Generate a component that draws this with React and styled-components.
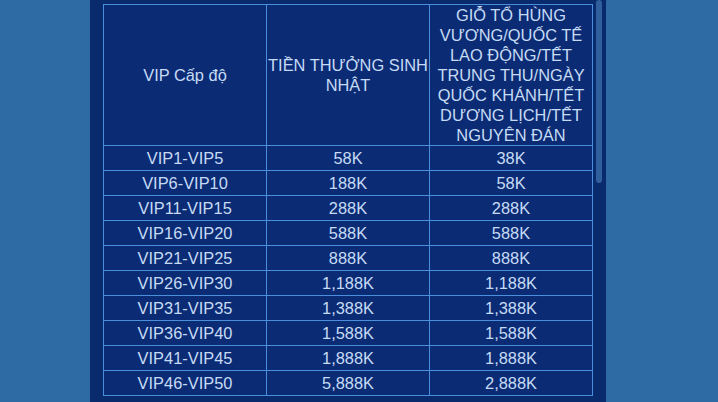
import React from 'react';
import styled, { createGlobalStyle } from 'styled-components';

const rows = [
  ['VIP1-VIP5', '58K', '38K'],
  ['VIP6-VIP10', '188K', '58K'],
  ['VIP11-VIP15', '288K', '288K'],
  ['VIP16-VIP20', '588K', '588K'],
  ['VIP21-VIP25', '888K', '888K'],
  ['VIP26-VIP30', '1,188K', '1,188K'],
  ['VIP31-VIP35', '1,388K', '1,388K'],
  ['VIP36-VIP40', '1,588K', '1,588K'],
  ['VIP41-VIP45', '1,888K', '1,888K'],
  ['VIP46-VIP50', '5,888K', '2,888K'],
];

const GlobalStyle = createGlobalStyle`
  html, body {
    margin: 0;
    padding: 0;
    background: #2e6aa3;
    font-family: "Liberation Sans", Arial, sans-serif;
  }
`;

const Page = styled.div`
  height: 402px;
  padding-left: 90px;
  overflow: hidden;
`;

const Panel = styled.div`
  display: flex;
  width: 516px;
  height: 402px;
  background: #0a2a6e;
  overflow: hidden;
`;

const Content = styled.div`
  width: 504px;
  box-sizing: border-box;
  padding: 4px 1px 0 13px;
`;

const ScrollTrack = styled.div`
  width: 12px;
  padding-left: 2px;
  box-sizing: border-box;
`;

const ScrollThumb = styled.div`
  width: 6px;
  height: 183px;
  border-radius: 3px;
  background: #2f5f9c;
`;

const Table = styled.table`
  width: 490px;
  table-layout: fixed;
  border-collapse: collapse;
  background: #0b2c74;
  color: #c6dbf5;
  font-size: 16.4px;
  line-height: 20px;
  text-align: center;
`;

const Head = styled.th`
  border: 1px solid #4a8fdc;
  padding: 0;
  font-weight: normal;
  vertical-align: middle;
`;

const Cell = styled.td`
  border: 1px solid #4a8fdc;
  padding: 2px 0;
`;

export default function App() {
  return (
    <>
      <GlobalStyle />
      <Page>
        <Panel>
          <Content>
            <Table>
              <thead>
                <tr>
                  <Head>VIP Cấp độ</Head>
                  <Head>TIỀN THƯỞNG SINH NHẬT</Head>
                  <Head>
                    GIỖ TỔ HÙNG VƯƠNG/QUỐC TẾ LAO ĐỘNG/TẾT TRUNG THU/NGÀY QUỐC
                    KHÁNH/TẾT DƯƠNG LỊCH/TẾT NGUYÊN ĐÁN
                  </Head>
                </tr>
              </thead>
              <tbody>
                {rows.map(r => (
                  <tr key={r[0]}>
                    {r.map((v, i) => (
                      <Cell key={i}>{v}</Cell>
                    ))}
                  </tr>
                ))}
              </tbody>
            </Table>
          </Content>
          <ScrollTrack>
            <ScrollThumb />
          </ScrollTrack>
        </Panel>
      </Page>
    </>
  );
}
